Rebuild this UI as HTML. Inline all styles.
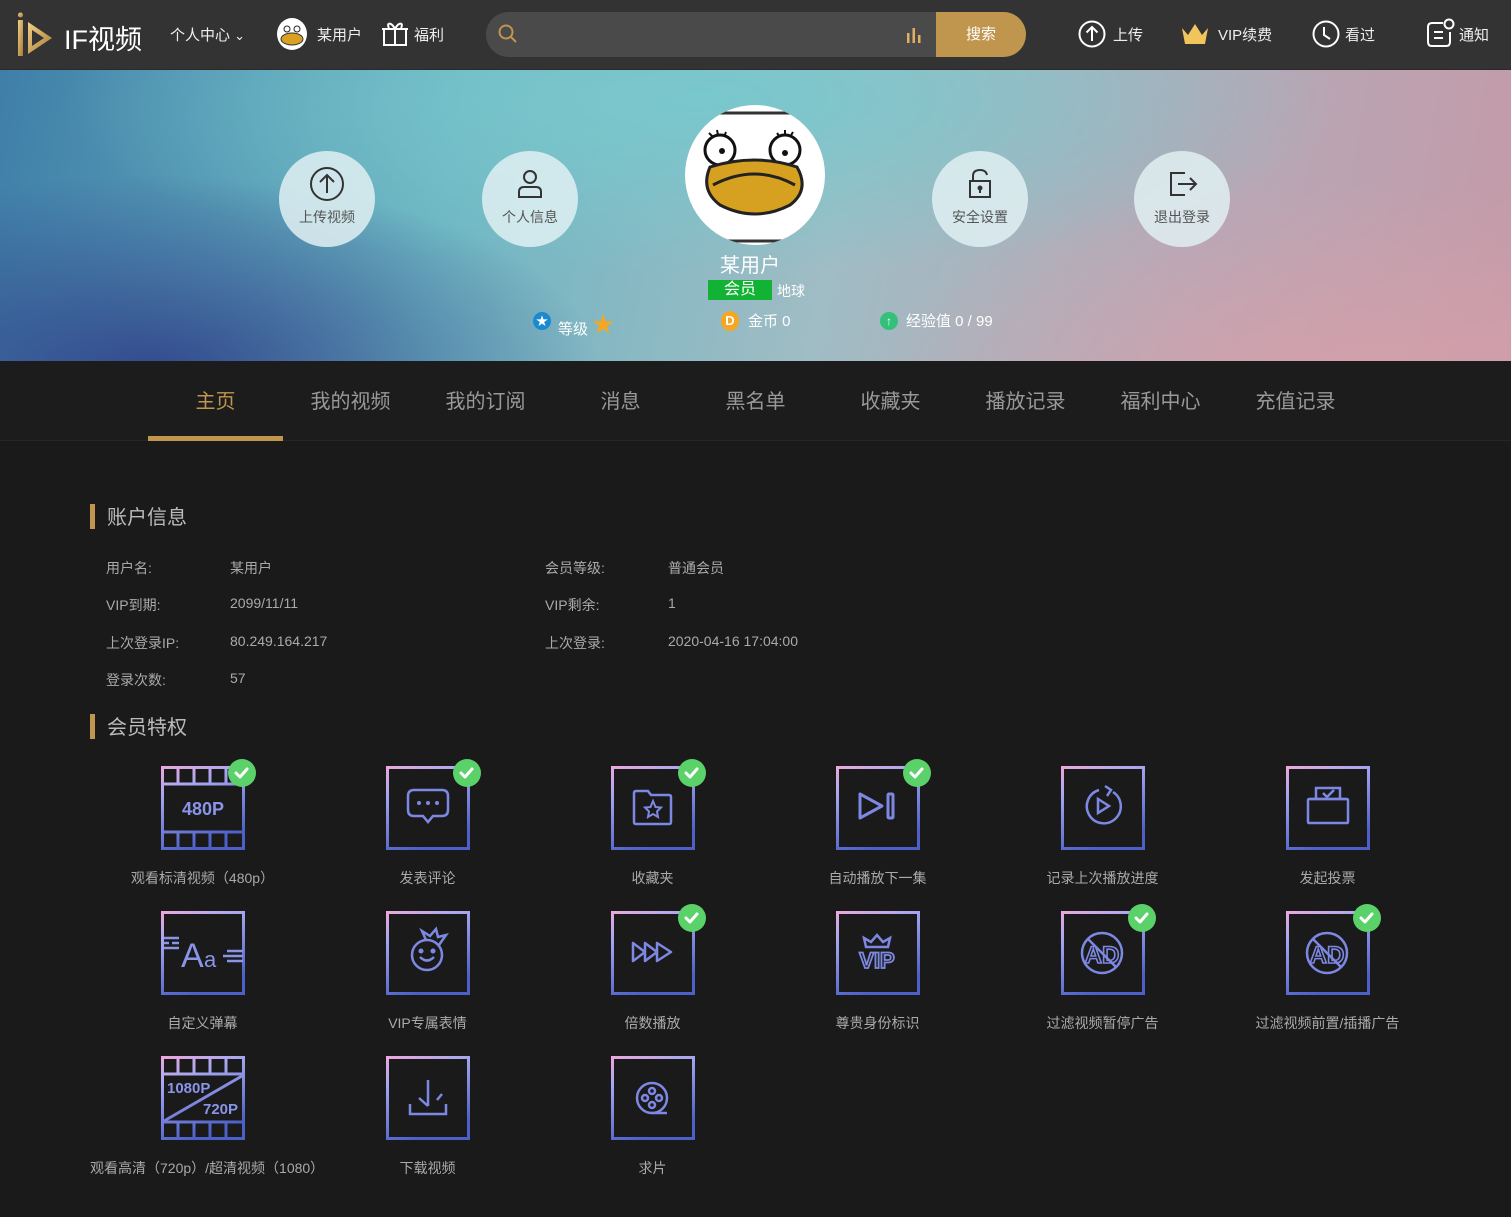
<!DOCTYPE html>
<html><head><meta charset="utf-8">
<style>
*{margin:0;padding:0;box-sizing:border-box}
body{width:1511px;height:1217px;background:#1a1a1a;font-family:"Liberation Sans","Noto Sans CJK SC",sans-serif;position:relative;overflow:hidden;color:#aaa}
.a{position:absolute}
.hdr{left:0;top:0;width:1511px;height:70px;background:#333;border-bottom:1px solid #2a2a2a}
.ht{color:#eee;font-size:15px;white-space:nowrap}
.banner{left:0;top:70px;width:1511px;height:291px;
background:
radial-gradient(ellipse 700px 300px at 1350px 320px,rgba(215,160,170,.9),rgba(215,160,170,0) 70%),
radial-gradient(ellipse 600px 260px at 150px 300px,rgba(50,70,140,.95),rgba(50,70,140,0) 75%),
radial-gradient(ellipse 800px 220px at 700px 30px,rgba(120,200,205,1),rgba(120,200,205,0) 80%),
linear-gradient(100deg,#3f7fa8 0%,#6db5c2 30%,#a0bcc4 55%,#b6a8b6 80%,#c49aa8 100%)}
.circ{width:96px;height:96px;border-radius:50%;background:rgba(225,240,242,.85);top:151px;text-align:center;color:#555;font-size:14px}
.circ svg{display:block;margin:14px auto 4px}
.tabs{left:0;top:361px;width:1511px;height:80px;background:#1c1c1c;border-bottom:1px solid #262626}
.tab{top:385px;width:135px;text-align:center;font-size:20px;color:#999}
.sec{font-size:20px;color:#bbb;left:107px}
.bar{left:90px;width:5px;height:25px;background:#c0954e}
.lb{font-size:14px;color:#aaa}
.perk{width:225px;text-align:center}
.perk .lbl{font-size:14px;color:#aaa;margin-top:18px;white-space:nowrap}
.perk svg{display:block;margin:0 auto}
.chk{width:28px;height:28px;border-radius:50%;background:#5bd16a}
</style></head><body>
<svg width="0" height="0" style="position:absolute">
<defs>
<linearGradient id="g" gradientUnits="userSpaceOnUse" x1="0" y1="0" x2="30" y2="84"><stop offset="0" stop-color="#f0a8dc"/><stop offset=".3" stop-color="#a8a8f0"/><stop offset="1" stop-color="#4c60c8"/></linearGradient>
</defs></svg>

<div class="a hdr"></div>
<svg class="a" style="left:16px;top:12px" width="42" height="46" viewBox="0 0 42 46"><defs><linearGradient id="lg" x1="0" y1="0" x2="1" y2="1"><stop offset="0" stop-color="#f2cf86"/><stop offset="1" stop-color="#a67a35"/></linearGradient></defs><rect x="2" y="8" width="5" height="36" fill="url(#lg)"/><circle cx="4.5" cy="3" r="2.5" fill="url(#lg)"/><path d="M12 10 L36 26 L12 42 Z M16 18 L16 34 L28 26Z" fill="url(#lg)" fill-rule="evenodd"/></svg>
<div class="a" style="left:64px;top:18px;color:#fff;font-size:27px">IF视频</div>
<div class="a ht" style="left:170px;top:24px">个人中心 <span style="font-size:13px">⌄</span></div>
<svg class="a" style="left:276px;top:17px" width="32" height="34" viewBox="0 0 32 34"><ellipse cx="16" cy="17" rx="15" ry="16" fill="#fff"/><circle cx="11" cy="12" r="3" fill="#fff" stroke="#222"/><circle cx="21" cy="12" r="3" fill="#fff" stroke="#222"/><ellipse cx="16" cy="22" rx="11" ry="6" fill="#d9a021" stroke="#333"/></svg>
<div class="a ht" style="left:317px;top:24px">某用户</div>
<svg class="a" style="left:381px;top:19px" width="28" height="28" viewBox="0 0 28 28" fill="none" stroke="#fff" stroke-width="2"><rect x="3" y="10" width="22" height="16"/><path d="M1 10H27M14 10V26M14 10C10 2 5 4 8 9M14 10C18 2 23 4 20 9"/></svg>
<div class="a ht" style="left:414px;top:24px">福利</div>
<div class="a" style="left:486px;top:12px;width:540px;height:45px;border-radius:23px;background:#4a4a4a;overflow:hidden">
 <div class="a" style="left:450px;top:0;width:90px;height:45px;background:#c0954e;color:#fff;font-size:15px;text-align:center;line-height:45px">搜索</div>
</div>
<svg class="a" style="left:498px;top:24px" width="20" height="20" viewBox="0 0 20 20" fill="none" stroke="#c0954e" stroke-width="2"><circle cx="8" cy="8" r="6.5"/><path d="M13 13L18 18"/></svg>
<svg class="a" style="left:905px;top:27px" width="18" height="16" viewBox="0 0 18 16" fill="#e0b060"><rect x="2" y="6" width="2.5" height="10"/><rect x="7.5" y="1" width="2.5" height="15"/><rect x="13" y="8" width="2.5" height="8"/></svg>
<svg class="a" style="left:1078px;top:20px" width="28" height="28" viewBox="0 0 28 28" fill="none" stroke="#fff" stroke-width="2"><circle cx="14" cy="14" r="12.5"/><path d="M14 21V7M8.5 12.5L14 7L19.5 12.5"/></svg>
<div class="a ht" style="left:1113px;top:24px">上传</div>
<svg class="a" style="left:1180px;top:22px" width="30" height="24" viewBox="0 0 30 24"><path d="M2 6L8 13L15 2L22 13L28 6L25 22H5Z" fill="#f2c45c"/></svg>
<div class="a ht" style="left:1218px;top:24px">VIP续费</div>
<svg class="a" style="left:1312px;top:20px" width="28" height="28" viewBox="0 0 28 28" fill="none" stroke="#fff" stroke-width="2"><circle cx="14" cy="14" r="12.5"/><path d="M12 7V15L18 19"/></svg>
<div class="a ht" style="left:1345px;top:24px">看过</div>
<svg class="a" style="left:1426px;top:18px" width="32" height="30" viewBox="0 0 32 30" fill="none" stroke="#fff" stroke-width="2"><path d="M17 5H6Q2 5 2 9V24Q2 28 6 28H20Q24 28 24 24V14"/><circle cx="23" cy="6" r="4.5"/><path d="M8 14H17M8 20H17"/></svg>
<div class="a ht" style="left:1459px;top:24px">通知</div>

<div class="a banner"></div>
<div class="a circ" style="left:279px"><svg width="38" height="38" viewBox="0 0 38 38" fill="none" stroke="#333" stroke-width="2"><circle cx="19" cy="19" r="16"/><path d="M19 28V10M12 17L19 10L26 17"/></svg>上传视频</div>
<div class="a circ" style="left:482px"><svg width="38" height="38" viewBox="0 0 38 38" fill="none" stroke="#333" stroke-width="2"><circle cx="19" cy="12" r="6"/><path d="M8 32V27Q8 22 13 22H25Q30 22 30 27V32Z"/></svg>个人信息</div>
<div class="a circ" style="left:932px"><svg width="38" height="38" viewBox="0 0 38 38" fill="none" stroke="#333" stroke-width="2"><path d="M12 16V11Q12 5 19 5Q25 5 26 10"/><rect x="9" y="16" width="20" height="16"/><circle cx="19" cy="23" r="1.5" fill="#333"/><path d="M19 24V28"/></svg>安全设置</div>
<div class="a circ" style="left:1134px"><svg width="38" height="38" viewBox="0 0 38 38" fill="none" stroke="#333" stroke-width="2"><path d="M22 8H8V30H22M15 19H33M27 13L33 19L27 25"/></svg>退出登录</div>
<div class="a" style="left:685px;top:105px;width:140px;height:140px;border-radius:50%;background:#fff;overflow:hidden">
<svg width="140" height="140" viewBox="0 0 140 140"><path d="M10 8H130M8 136H132" stroke="#333" stroke-width="3"/><circle cx="35" cy="45" r="15" fill="#fff" stroke="#111" stroke-width="3"/><circle cx="100" cy="45" r="15" fill="#fff" stroke="#111" stroke-width="3"/><circle cx="37" cy="46" r="3" fill="#111"/><circle cx="100" cy="48" r="3" fill="#111"/><path d="M24 28l4 4M32 25l1 5M41 27l-2 5M92 28l3 4M100 25v5M108 27l-3 5" stroke="#111" stroke-width="2"/><path d="M25 62Q70 48 112 62Q125 85 105 100Q70 118 35 100Q15 85 25 62Z" fill="#d6a020" stroke="#222" stroke-width="3"/><path d="M28 80Q70 58 110 80" fill="none" stroke="#222" stroke-width="3"/></svg></div>
<div class="a" style="left:705px;top:249px;width:90px;text-align:center;color:#fff;font-size:20px">某用户</div>
<div class="a" style="left:708px;top:280px;width:64px;height:20px;background:#12b334;color:#fff;font-size:16px;text-align:center;line-height:20px">会员</div>
<div class="a" style="left:777px;top:281px;color:#fff;font-size:14px">地球</div>
<div class="a" style="left:533px;top:312px;width:18px;height:18px;border-radius:50%;background:#1a8ad0;color:#fff;font-size:12px;text-align:center;line-height:18px">★</div>
<div class="a" style="left:558px;top:309px;color:#fff;font-size:15px">等级 <span style="color:#f5a623;font-size:22px;position:relative;top:-2px">★</span></div>
<div class="a" style="left:721px;top:311px;width:18px;height:20px;border-radius:50%;background:#f5a623;color:#fff;font-size:13px;text-align:center;line-height:20px;font-weight:bold">D</div>
<div class="a" style="left:748px;top:310px;color:#fff;font-size:15px">金币 0</div>
<div class="a" style="left:880px;top:312px;width:18px;height:18px;border-radius:50%;background:#33c07a;color:#fff;font-size:12px;text-align:center;line-height:18px">↑</div>
<div class="a" style="left:906px;top:310px;color:#fff;font-size:15px">经验值 0 / 99</div>

<div class="a tabs"></div>
<div class="a tab" style="left:148px;color:#c0954e">主页</div>
<div class="a tab" style="left:283px">我的视频</div>
<div class="a tab" style="left:418px">我的订阅</div>
<div class="a tab" style="left:553px">消息</div>
<div class="a tab" style="left:688px">黑名单</div>
<div class="a tab" style="left:823px">收藏夹</div>
<div class="a tab" style="left:958px">播放记录</div>
<div class="a tab" style="left:1093px">福利中心</div>
<div class="a tab" style="left:1228px">充值记录</div>
<div class="a" style="left:148px;top:436px;width:135px;height:5px;background:#c0954e"></div>

<div class="a bar" style="top:504px"></div><div class="a sec" style="top:501px">账户信息</div>
<div class="a lb" style="left:106px;top:558px">用户名:</div><div class="a lb" style="left:230px;top:558px">某用户</div>
<div class="a lb" style="left:545px;top:558px">会员等级:</div><div class="a lb" style="left:668px;top:558px">普通会员</div>
<div class="a lb" style="left:106px;top:595px">VIP到期:</div><div class="a lb" style="left:230px;top:595px">2099/11/11</div>
<div class="a lb" style="left:545px;top:595px">VIP剩余:</div><div class="a lb" style="left:668px;top:595px">1</div>
<div class="a lb" style="left:106px;top:633px">上次登录IP:</div><div class="a lb" style="left:230px;top:633px">80.249.164.217</div>
<div class="a lb" style="left:545px;top:633px">上次登录:</div><div class="a lb" style="left:668px;top:633px">2020-04-16 17:04:00</div>
<div class="a lb" style="left:106px;top:670px">登录次数:</div><div class="a lb" style="left:230px;top:670px">57</div>
<div class="a bar" style="top:714px"></div><div class="a sec" style="top:711px">会员特权</div>

<div class="a perk" style="left:90px;top:766px"><svg width="84" height="84" viewBox="0 0 84 84" fill="none" stroke="url(#g)" stroke-width="3"><rect x="1.5" y="1.5" width="81" height="81"/><path d="M1.5 18H82.5M1.5 66H82.5M17 1.5V18M33 1.5V18M49 1.5V18M65 1.5V18M17 66V82.5M33 66V82.5M49 66V82.5M65 66V82.5"/><text x="42" y="49" text-anchor="middle" fill="#8a94e8" stroke="none" font-size="18" font-weight="bold" font-family="Liberation Sans">480P</text></svg><div class="lbl">观看标清视频（480p）</div></div>
<div class="a perk" style="left:315px;top:766px"><svg width="84" height="84" viewBox="0 0 84 84" fill="none" stroke="url(#g)" stroke-width="3"><rect x="1.5" y="1.5" width="81" height="81"/><path d="M22 30Q22 24 28 24H56Q62 24 62 30V44Q62 50 56 50H47L42 56L37 50H28Q22 50 22 44Z" stroke="#7d88e2" stroke-width="2.5"/><circle cx="33" cy="37" r="2" fill="#7d88e2" stroke="none"/><circle cx="42" cy="37" r="2" fill="#7d88e2" stroke="none"/><circle cx="51" cy="37" r="2" fill="#7d88e2" stroke="none"/></svg><div class="lbl">发表评论</div></div>
<div class="a perk" style="left:540px;top:766px"><svg width="84" height="84" viewBox="0 0 84 84" fill="none" stroke="url(#g)" stroke-width="3"><rect x="1.5" y="1.5" width="81" height="81"/><g stroke="#7d88e2" stroke-width="2.5"><path d="M23 27Q23 25 25 25H37L40 29H58Q60 29 60 31V56Q60 58 58 58H25Q23 58 23 56Z"/><path d="M42 35L44.5 41L50 41.5L46 45.5L47 51L42 48L37 51L38 45.5L34 41.5L39.5 41Z" stroke-width="2"/></g></svg><div class="lbl">收藏夹</div></div>
<div class="a perk" style="left:765px;top:766px"><svg width="84" height="84" viewBox="0 0 84 84" fill="none" stroke="url(#g)" stroke-width="3"><rect x="1.5" y="1.5" width="81" height="81"/><g stroke="#7d88e2" stroke-width="3" stroke-linejoin="round"><path d="M24 28V52L46 40Z"/><rect x="52" y="28" width="5" height="24" rx="1"/></g></svg><div class="lbl">自动播放下一集</div></div>
<div class="a perk" style="left:990px;top:766px"><svg width="84" height="84" viewBox="0 0 84 84" fill="none" stroke="url(#g)" stroke-width="3"><rect x="1.5" y="1.5" width="81" height="81"/><g stroke="#7d88e2" stroke-width="2.5"><path d="M52 26A17 17 0 1 1 38 24"/><path d="M44 20L50 24L46 30"/><path d="M37 33V47L48 40Z"/></g></svg><div class="lbl">记录上次播放进度</div></div>
<div class="a perk" style="left:1215px;top:766px"><svg width="84" height="84" viewBox="0 0 84 84" fill="none" stroke="url(#g)" stroke-width="3"><rect x="1.5" y="1.5" width="81" height="81"/><g stroke="#7d88e2" stroke-width="2.5"><rect x="22" y="33" width="40" height="24" rx="1"/><path d="M30 33V22H54V33M24 33H60"/><path d="M37 27L41 31L48 24"/></g></svg><div class="lbl">发起投票</div></div>

<div class="a perk" style="left:90px;top:911px"><svg width="84" height="84" viewBox="0 0 84 84" fill="none" stroke="url(#g)" stroke-width="3"><rect x="1.5" y="1.5" width="81" height="81"/><g stroke="#8a94e8" stroke-width="2.5"><path d="M3 27H18M3 32H8M11 32H18M3 37H18M66 40H82M62 45H82M66 50H82"/></g><text x="20" y="56" fill="#8a94e8" stroke="none" font-size="34" font-family="Liberation Sans">A</text><text x="43" y="56" fill="#8a94e8" stroke="none" font-size="22" font-family="Liberation Sans">a</text></svg><div class="lbl">自定义弹幕</div></div>
<div class="a perk" style="left:315px;top:911px"><svg width="84" height="84" viewBox="0 0 84 84" fill="none" stroke="url(#g)" stroke-width="3"><rect x="1.5" y="1.5" width="81" height="81"/><g stroke="#7d88e2" stroke-width="2.5"><circle cx="41" cy="44" r="15"/><path d="M34 46Q41 53 48 46"/><circle cx="35" cy="40" r="1.3" fill="#7d88e2"/><circle cx="47" cy="40" r="1.3" fill="#7d88e2"/><path d="M40 29L36 20L44 25L50 18L52 26L60 24L53 34"/></g></svg><div class="lbl">VIP专属表情</div></div>
<div class="a perk" style="left:540px;top:911px"><svg width="84" height="84" viewBox="0 0 84 84" fill="none" stroke="url(#g)" stroke-width="3"><rect x="1.5" y="1.5" width="81" height="81"/><g stroke="#7d88e2" stroke-width="2.5" stroke-linejoin="round"><path d="M22 32V50L34 41Z M34 32V50L46 41Z M46 32V50L60 41Z"/></g></svg><div class="lbl">倍数播放</div></div>
<div class="a perk" style="left:765px;top:911px"><svg width="84" height="84" viewBox="0 0 84 84" fill="none" stroke="url(#g)" stroke-width="3"><rect x="1.5" y="1.5" width="81" height="81"/><g stroke="#7d88e2" stroke-width="2.5"><path d="M30 36L28 27L35 31L41 24L47 31L54 27L52 36Z"/></g><text x="41" y="57" text-anchor="middle" fill="none" stroke="#7d88e2" stroke-width="1.8" font-size="22" font-weight="bold" font-family="Liberation Sans">VIP</text></svg><div class="lbl">尊贵身份标识</div></div>
<div class="a perk" style="left:990px;top:911px"><svg width="84" height="84" viewBox="0 0 84 84" fill="none" stroke="url(#g)" stroke-width="3"><rect x="1.5" y="1.5" width="81" height="81"/><g stroke="#7d88e2" stroke-width="2.5"><circle cx="41" cy="42" r="20"/><path d="M27 28L55 56"/></g><text x="41" y="52" text-anchor="middle" fill="none" stroke="#7d88e2" stroke-width="1.6" font-size="24" font-weight="bold" font-family="Liberation Sans">AD</text></svg><div class="lbl">过滤视频暂停广告</div></div>
<div class="a perk" style="left:1215px;top:911px"><svg width="84" height="84" viewBox="0 0 84 84" fill="none" stroke="url(#g)" stroke-width="3"><rect x="1.5" y="1.5" width="81" height="81"/><g stroke="#7d88e2" stroke-width="2.5"><circle cx="41" cy="42" r="20"/><path d="M27 28L55 56"/></g><text x="41" y="52" text-anchor="middle" fill="none" stroke="#7d88e2" stroke-width="1.6" font-size="24" font-weight="bold" font-family="Liberation Sans">AD</text></svg><div class="lbl">过滤视频前置/插播广告</div></div>

<div class="a perk" style="left:90px;top:1056px"><svg width="84" height="84" viewBox="0 0 84 84" fill="none" stroke="url(#g)" stroke-width="3"><rect x="1.5" y="1.5" width="81" height="81"/><path d="M1.5 18H82.5M1.5 66H82.5M17 1.5V18M33 1.5V18M49 1.5V18M65 1.5V18M17 66V82.5M33 66V82.5M49 66V82.5M65 66V82.5M3 65L81 20"/><text x="6" y="37" fill="#8a94e8" stroke="none" font-size="15" font-weight="bold" font-family="Liberation Sans">1080P</text><text x="42" y="58" fill="#8a94e8" stroke="none" font-size="15" font-weight="bold" font-family="Liberation Sans">720P</text></svg><div class="lbl">观看高清（720p）/超清视频（1080）</div></div>
<div class="a perk" style="left:315px;top:1056px"><svg width="84" height="84" viewBox="0 0 84 84" fill="none" stroke="url(#g)" stroke-width="3"><rect x="1.5" y="1.5" width="81" height="81"/><g stroke="#7d88e2" stroke-width="2.5"><path d="M42 24V50M33 42L42 50M51 44L56 38M24 48V58H60V48"/></g></svg><div class="lbl">下载视频</div></div>
<div class="a perk" style="left:540px;top:1056px"><svg width="84" height="84" viewBox="0 0 84 84" fill="none" stroke="url(#g)" stroke-width="3"><rect x="1.5" y="1.5" width="81" height="81"/><g stroke="#7d88e2" stroke-width="2.5"><circle cx="41" cy="42" r="15"/><circle cx="41" cy="35" r="3"/><circle cx="41" cy="49" r="3"/><circle cx="34" cy="42" r="3"/><circle cx="48" cy="42" r="3"/><path d="M41 57H56"/></g></svg><div class="lbl">求片</div></div>

<div class="a chk" style="left:228px;top:759px"></div>
<div class="a chk" style="left:453px;top:759px"></div>
<div class="a chk" style="left:678px;top:759px"></div>
<div class="a chk" style="left:903px;top:759px"></div>
<div class="a chk" style="left:678px;top:904px"></div>
<div class="a chk" style="left:1128px;top:904px"></div>
<div class="a chk" style="left:1353px;top:904px"></div>
<svg class="a" style="left:0;top:0;pointer-events:none" width="1511" height="1217" fill="none" stroke="#fff" stroke-width="3" stroke-linecap="round" stroke-linejoin="round">
<path d="M236 773l4 4l7-8M461 773l4 4l7-8M686 773l4 4l7-8M911 773l4 4l7-8M686 918l4 4l7-8M1136 918l4 4l7-8M1361 918l4 4l7-8"/>
</svg>
</body></html>
